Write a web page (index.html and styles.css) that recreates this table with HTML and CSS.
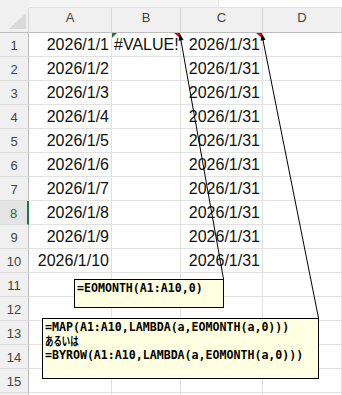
FILE: index.html
```html
<!DOCTYPE html>
<html lang="ja">
<head>
<meta charset="utf-8">
<link rel="stylesheet" href="styles.css">
</head>
<body>
<div class="sheet">
  <div class="topbar"><div class="tb-left"></div><div class="tb-mid"></div><div class="tb-right"></div></div>
  <div class="grid">
    <div class="corner"><span class="corner-tri"></span></div>
    <div class="colhead">A</div>
    <div class="colhead">B</div>
    <div class="colhead">C</div>
    <div class="colhead">D</div>

    <div class="rowhead">1</div><div class="cell num">2026/1/1</div><div class="cell txt err">#VALUE!</div><div class="cell num note-mark">2026/1/31</div><div class="cell"></div>
    <div class="rowhead">2</div><div class="cell num">2026/1/2</div><div class="cell"></div><div class="cell num">2026/1/31</div><div class="cell"></div>
    <div class="rowhead">3</div><div class="cell num">2026/1/3</div><div class="cell"></div><div class="cell num">2026/1/31</div><div class="cell"></div>
    <div class="rowhead">4</div><div class="cell num">2026/1/4</div><div class="cell"></div><div class="cell num">2026/1/31</div><div class="cell"></div>
    <div class="rowhead">5</div><div class="cell num">2026/1/5</div><div class="cell"></div><div class="cell num">2026/1/31</div><div class="cell"></div>
    <div class="rowhead">6</div><div class="cell num">2026/1/6</div><div class="cell"></div><div class="cell num">2026/1/31</div><div class="cell"></div>
    <div class="rowhead">7</div><div class="cell num">2026/1/7</div><div class="cell"></div><div class="cell num">2026/1/31</div><div class="cell"></div>
    <div class="rowhead active">8</div><div class="cell num">2026/1/8</div><div class="cell"></div><div class="cell num">2026/1/31</div><div class="cell"></div>
    <div class="rowhead">9</div><div class="cell num">2026/1/9</div><div class="cell"></div><div class="cell num">2026/1/31</div><div class="cell"></div>
    <div class="rowhead">10</div><div class="cell num">2026/1/10</div><div class="cell"></div><div class="cell num">2026/1/31</div><div class="cell"></div>
    <div class="rowhead">11</div><div class="cell"></div><div class="cell"></div><div class="cell"></div><div class="cell"></div>
    <div class="rowhead">12</div><div class="cell"></div><div class="cell"></div><div class="cell"></div><div class="cell"></div>
    <div class="rowhead">13</div><div class="cell"></div><div class="cell"></div><div class="cell"></div><div class="cell"></div>
    <div class="rowhead">14</div><div class="cell"></div><div class="cell"></div><div class="cell"></div><div class="cell"></div>
    <div class="rowhead">15</div><div class="cell"></div><div class="cell"></div><div class="cell"></div><div class="cell"></div>
    <div class="rowhead"></div><div class="cell"></div><div class="cell"></div><div class="cell"></div><div class="cell"></div>
  </div>

  <svg class="arrows" width="342" height="395" viewBox="0 0 342 395">
    <line x1="180" y1="35" x2="223.5" y2="279" stroke="#000" stroke-width="1"/>
    <polygon points="180,34 183.5,40 178.5,40.8" fill="#000"/>
    <line x1="262" y1="35" x2="318.5" y2="318" stroke="#000" stroke-width="1"/>
    <polygon points="262,34 265.6,39.8 260.6,40.8" fill="#000"/>
  </svg>

  <div class="note note1"><div class="code">=EOMONTH(A1:A10,0)</div></div>
  <div class="note note2">
    <div class="code">=MAP(A1:A10,LAMBDA(a,EOMONTH(a,0)))</div>
    <div class="jp"><span class="jp-text">あるいは</span></div>
    <div class="code">=BYROW(A1:A10,LAMBDA(a,EOMONTH(a,0)))</div>
  </div>
</div>
</body>
</html>
```

FILE: styles.css
```css
* { box-sizing: border-box; }
html, body { margin: 0; padding: 0; background: #fff; }
body { width: 342px; height: 395px; overflow: hidden; font-family: "Liberation Sans", Arial, sans-serif; }

.sheet { position: relative; width: 342px; height: 395px; overflow: hidden; }

.topbar { display: flex; height: 8px; background: #f0f0f0; }
.tb-left { width: 29px; }
.tb-mid { flex: 1; background: #f5f5f5; border-bottom: 1px solid #e2e2e2; }
.tb-right { width: 124px; background: #fdfdfd; border-bottom: 1px solid #e2e2e2; border-left: 1px solid #e6e6e6; }

.grid {
  display: grid;
  grid-template-columns: 29px 83px 69px 82px 79px;
  grid-template-rows: 25px repeat(16, 24px);
}

.corner {
  position: relative;
  background: #f0f0f0;
  border-right: 1px solid #d6d6d6;
  border-bottom: 1px solid #bdbdbd;
}
.corner-tri {
  position: absolute;
  right: 2px;
  bottom: 3px;
  width: 0; height: 0;
  border-left: 17px solid transparent;
  border-bottom: 16px solid #dadada;
}

.colhead {
  background: #f0f0f0;
  border-right: 1px solid #d6d6d6;
  border-bottom: 1px solid #bdbdbd;
  color: #444;
  font-size: 13px;
  display: flex;
  align-items: center;
  justify-content: center;
  padding-bottom: 5px;
}

.rowhead {
  background: #f0f0f0;
  border-right: 1px solid #bdbdbd;
  border-bottom: 1px solid #dcdcdc;
  color: #444;
  font-size: 13px;
  display: flex;
  align-items: center;
  justify-content: center;
  padding-top: 2px;
}
.rowhead.active {
  background: #e4e4e4;
  color: #1e6b45;
  border-right: 2px solid #217346;
}

.cell {
  position: relative;
  border-right: 1px solid #e1e1e1;
  border-bottom: 1px solid #e1e1e1;
  font-size: 16px;
  line-height: 23px;
  color: #111;
  white-space: nowrap;
}
.num { text-align: right; padding-right: 2px; }
.txt { text-align: left; padding-left: 2px; overflow: visible; }

.err::before {
  content: "";
  position: absolute;
  left: 0; top: 0;
  border-top: 5px solid #1e7b3c;
  border-right: 5px solid transparent;
}
.err::after,
.note-mark::after {
  content: "";
  position: absolute;
  right: 0; top: 0;
  border-top: 5px solid #e00000;
  border-left: 6px solid transparent;
}

.arrows { position: absolute; left: 0; top: 0; pointer-events: none; }

.note {
  position: absolute;
  background: #ffffe1;
  border: 1px solid #000;
  padding: 1px 2px;
  color: #000;
}
.note1 { left: 74px; top: 279px; width: 150px; height: 29px; }
.note2 { left: 42px; top: 318px; width: 277px; height: 61px; }

.code {
  font-family: "DejaVu Sans Mono", "Liberation Mono", monospace;
  font-weight: bold;
  font-size: 11.6px;
  line-height: 14px;
  white-space: nowrap;
}
.jp {
  font-family: "Noto Sans CJK JP", sans-serif;
  font-weight: bold;
  font-size: 12px;
  line-height: 14px;
  white-space: nowrap;
}
.jp-text {
  display: inline-block;
  transform: scaleX(0.7);
  transform-origin: left center;
}
```
